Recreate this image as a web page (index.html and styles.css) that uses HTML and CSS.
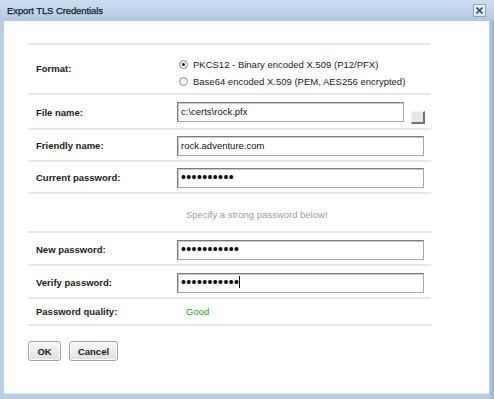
FILE: index.html
```html
<!DOCTYPE html>
<html>
<head>
<meta charset="utf-8">
<link rel="stylesheet" href="styles.css">
</head>
<body>
<div class="window">
  <div class="titlebar">
    <span class="title">Export TLS Credentials</span>
    <span class="close">
      <svg width="7" height="7" viewBox="0 0 7 7"><path d="M0.5 0.5 L6.5 6.5 M6.5 0.5 L0.5 6.5" stroke="#3d4b5e" stroke-width="1.6" fill="none"/></svg>
    </span>
  </div>
  <div class="client">
    <div class="form">
      <div class="row row-format">
        <div class="label label-top">Format:</div>
        <div class="value radios">
          <div class="radio-line"><span class="radio checked"></span>PKCS12 - Binary encoded X.509 (P12/PFX)</div>
          <div class="radio-line"><span class="radio"></span>Base64 encoded X.509 (PEM, AES256 encrypted)</div>
        </div>
      </div>
      <div class="row row-file">
        <div class="label">File name:</div>
        <div class="value">
          <div class="field field-short">c:\certs\rock.pfx</div>
          <span class="browse"></span>
        </div>
      </div>
      <div class="row row-30">
        <div class="label">Friendly name:</div>
        <div class="value"><div class="field">rock.adventure.com</div></div>
      </div>
      <div class="row row-30">
        <div class="label">Current password:</div>
        <div class="value"><div class="field"><span class="dots">••••••••••</span></div></div>
      </div>
      <div class="row row-hint">
        <div class="hint">Specify a strong password below!</div>
      </div>
      <div class="row row-31">
        <div class="label">New password:</div>
        <div class="value"><div class="field"><span class="dots">•••••••••••</span></div></div>
      </div>
      <div class="row row-31">
        <div class="label">Verify password:</div>
        <div class="value"><div class="field"><span class="dots">•••••••••••</span><span class="caret"></span></div></div>
      </div>
      <div class="row row-quality">
        <div class="label">Password quality:</div>
        <div class="value"><span class="good">Good</span></div>
      </div>
    </div>
    <div class="buttons">
      <button class="btn btn-ok">OK</button>
      <button class="btn btn-cancel">Cancel</button>
    </div>
  </div>
</div>
</body>
</html>
```

FILE: styles.css
```css
html, body {
  margin: 0;
  padding: 0;
  background: #ffffff;
}

.window {
  width: 494px;
  height: 399px;
  box-sizing: border-box;
  background: linear-gradient(to right, #b8cce4 0, #b8cce4 489px, #a7bfdc 491px, #9ab5d7 494px);
  padding: 0 5px 5px 4px;
  display: flex;
  flex-direction: column;
  font-family: "Liberation Sans", Arial, sans-serif;
}

.titlebar {
  height: 21px;
  margin: 0 -5px 0 -4px;
  padding: 0 8px 0 7px;
  background: linear-gradient(to bottom, #cfdeef 0, #c3d5eb 40%, #b1c8e2 100%);
  display: flex;
  align-items: center;
  justify-content: space-between;
  box-sizing: border-box;
}

.title {
  font-size: 9.5px;
  color: #151c26;
  letter-spacing: -0.1px;
  -webkit-text-stroke: 0.25px #151c26;
}

.close {
  width: 13px;
  height: 13px;
  box-sizing: border-box;
  border: 1px solid #8ea3bf;
  background: linear-gradient(to bottom, #f2f6fb, #dfe7f2);
  display: flex;
  align-items: center;
  justify-content: center;
  margin-top: -1px;
}

.close svg {
  display: block;
}

.client {
  flex: 1;
  background: #ffffff;
  border-bottom: 1px solid #dfe3e8;
  padding: 22px 0 0 24px;
  box-sizing: border-box;
}

.form {
  width: 403px;
  border-top: 2px solid #e6e6e6;
}

.row {
  display: flex;
  border-bottom: 2px solid #e6e6e6;
  box-sizing: border-box;
  align-items: center;
}

.label {
  width: 149px;
  flex: none;
  box-sizing: border-box;
  padding-left: 8px;
  font-size: 9.5px;
  font-weight: bold;
  color: #1a1a1a;
}

.value {
  display: flex;
  align-items: center;
  flex: 1;
  font-size: 9.5px;
  color: #1a1a1a;
}

.row-format {
  height: 50px;
  align-items: flex-start;
}

.label-top {
  padding-top: 18px;
}

.radios {
  flex-direction: column;
  align-items: flex-start;
  padding-top: 11px;
}

.radio-line {
  display: flex;
  align-items: center;
  height: 17px;
  font-size: 9.5px;
  color: #1a1a1a;
}

.radio {
  width: 9px;
  height: 9px;
  box-sizing: border-box;
  border-radius: 50%;
  border: 1px solid #8e8e8e;
  background: linear-gradient(135deg, #e4e4e4, #ffffff);
  margin: 0 5px 0 2px;
  display: flex;
  align-items: center;
  justify-content: center;
}

.radio.checked::after {
  content: "";
  width: 3px;
  height: 3px;
  border-radius: 50%;
  background: #1a1a1a;
}

.row-file {
  height: 35px;
  padding-top: 1px;
}

.row-30 {
  height: 32px;
  padding-top: 1px;
}

.row-hint {
  height: 39px;
  padding-top: 4px;
}

.row-31 {
  height: 33px;
  padding-top: 2px;
}

.row-quality {
  height: 27px;
}

.field {
  width: 247px;
  height: 20px;
  box-sizing: border-box;
  border-top: 1px solid #7c7c7c;
  border-left: 1px solid #7c7c7c;
  border-right: 1px solid #a8a8a8;
  border-bottom: 1px solid #a8a8a8;
  box-shadow: inset 1px 1px 0 #c9c9c9;
  padding: 0 3px 1px 3px;
  display: flex;
  align-items: center;
  font-size: 9.5px;
  color: #111;
  background: #ffffff;
}

.field-short {
  width: 227px;
}

.browse {
  width: 14px;
  height: 13px;
  box-sizing: border-box;
  margin-left: 7px;
  align-self: flex-end;
  margin-bottom: -2px;
  background: #e6e6e6;
  border-top: 1px solid #f4f4f4;
  border-left: 1px solid #f4f4f4;
  border-right: 2px solid #6f6f6f;
  border-bottom: 2px solid #6f6f6f;
}

.dots {
  font-size: 14px;
  letter-spacing: 0.4px;
  line-height: 10px;
  color: #000;
}

.caret {
  width: 1px;
  height: 12px;
  background: #000;
}

.hint {
  padding-left: 158px;
  font-size: 9.5px;
  color: #9c9c9c;
}

.good {
  padding-left: 9px;
  font-size: 9.5px;
  color: #2f9a2f;
}

.buttons {
  display: flex;
  gap: 8px;
  margin-top: 15px;
}

.btn {
  height: 20px;
  box-sizing: border-box;
  border: 1px solid #a2a2a2;
  border-radius: 3px;
  background: linear-gradient(to bottom, #f6f6f6 0, #ececec 50%, #dedede 100%);
  box-shadow: inset 0 0 0 1px #fbfbfb;
  font-family: "Liberation Sans", Arial, sans-serif;
  font-size: 9.5px;
  font-weight: bold;
  color: #1a1a1a;
  padding: 0;
  margin: 0;
}

.btn-ok {
  width: 33px;
}

.btn-cancel {
  width: 49px;
}
```
